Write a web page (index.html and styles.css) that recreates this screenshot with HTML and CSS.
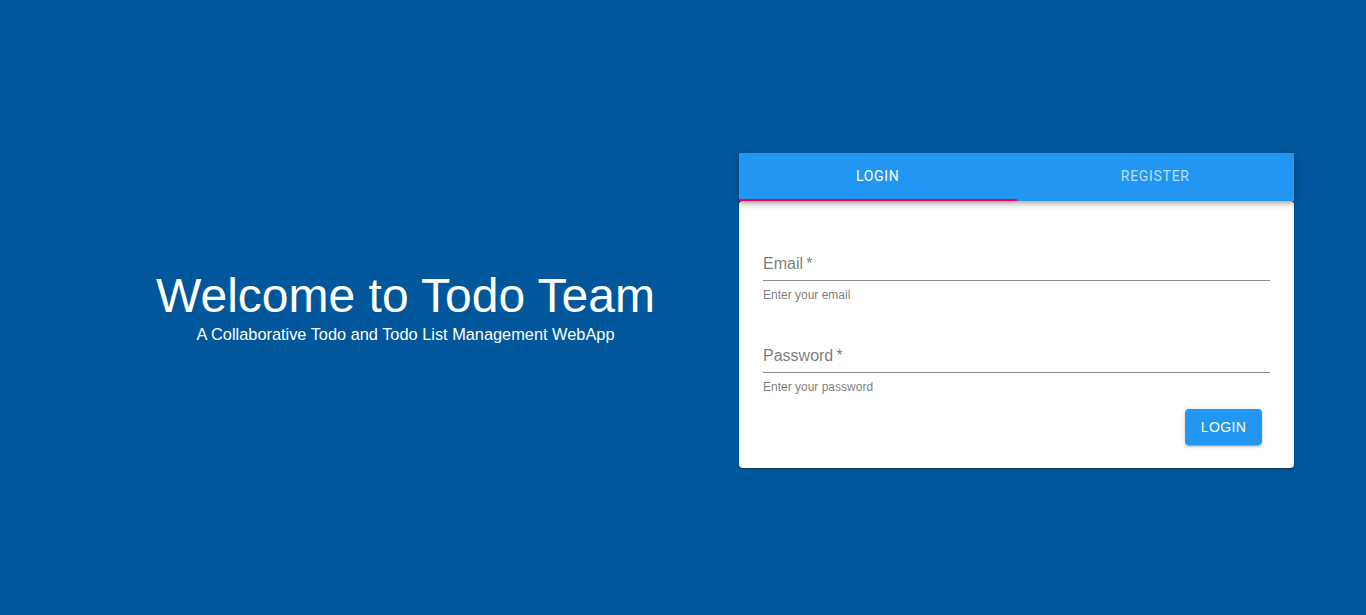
FILE: index.html
```html
<!DOCTYPE html>
<html lang="en">
<head>
<meta charset="utf-8">
<title>Todo Team</title>
<link rel="stylesheet" href="styles.css">
</head>
<body>
<main class="page">
  <section class="hero">
    <h1 class="hero-title">Welcome to Todo Team</h1>
    <p class="hero-sub">A Collaborative Todo and Todo List Management WebApp</p>
  </section>
  <section class="auth">
    <div class="tabs">
      <div class="tab tab-active">LOGIN</div>
      <div class="tab">REGISTER</div>
      <span class="indicator"></span>
    </div>
    <form class="panel">
      <div class="field">
        <div class="input">Email&#8201;*</div>
        <div class="helper">Enter your email</div>
      </div>
      <div class="field field-second">
        <div class="input">Password&#8201;*</div>
        <div class="helper">Enter your password</div>
      </div>
      <div class="actions">
        <button type="button" class="btn">LOGIN</button>
      </div>
    </form>
  </section>
</main>
</body>
</html>
```
FILE: styles.css
```css
* { box-sizing: border-box; }
html, body { margin: 0; height: 100%; }
body {
  background: #01579b;
  font-family: "Liberation Sans", Arial, sans-serif;
}
.page {
  height: 615px;
  padding: 0 72px;
  display: grid;
  grid-template-columns: 667px 555px;
  align-items: center;
}
.hero {
  text-align: center;
  color: #fff;
}
.hero-title {
  margin: 0;
  font-weight: 400;
  font-size: 48px;
  line-height: 52px;
}
.hero-sub {
  margin: 0;
  font-size: 16.35px;
  line-height: 24px;
}
.auth {
  margin-top: 6px;
}
.tabs {
  position: relative;
  display: flex;
  height: 48px;
  background: #2196f3;
  box-shadow: 0 2px 4px -1px rgba(0,0,0,0.2), 0 4px 5px 0 rgba(0,0,0,0.14), 0 1px 10px 0 rgba(0,0,0,0.12);
  z-index: 1;
}
.tab {
  flex: 1;
  display: flex;
  align-items: center;
  justify-content: center;
  padding-bottom: 2px;
  font-family: Roboto, "Liberation Sans", sans-serif;
  font-weight: 400;
  font-size: 14px;
  letter-spacing: 0.7px;
  color: rgba(255,255,255,0.7);
}
.tab-active { color: #fff; }
.indicator {
  position: absolute;
  left: 0;
  bottom: 0;
  width: 50%;
  height: 2px;
  background: #f50057;
}
.panel {
  background: #fff;
  border-radius: 4px;
  padding: 31px 24px 23px;
  box-shadow: 0 2px 1px -1px rgba(0,0,0,0.2), 0 1px 1px 0 rgba(0,0,0,0.14), 0 1px 3px 0 rgba(0,0,0,0.12);
}
.field {
  padding-top: 16px;
}
.field-second { margin-top: 22px; }
.input {
  height: 33px;
  border-bottom: 1px solid #8c8c8c;
  font-size: 16px;
  line-height: 32px;
  color: rgba(0,0,0,0.54);
}
.helper {
  margin-top: 7px;
  font-size: 12px;
  line-height: 14px;
  color: rgba(0,0,0,0.54);
}
.actions {
  display: flex;
  justify-content: flex-end;
  padding-right: 8px;
  margin-top: 15px;
}
.btn {
  width: 77px;
  height: 36px;
  border: 0;
  border-radius: 4px;
  background: #2196f3;
  color: #fff;
  font-family: "Liberation Sans", Arial, sans-serif;
  font-size: 14px;
  letter-spacing: 0.4px;
  box-shadow: 0 3px 1px -2px rgba(0,0,0,0.2), 0 2px 2px 0 rgba(0,0,0,0.14), 0 1px 5px 0 rgba(0,0,0,0.12);
}
```
